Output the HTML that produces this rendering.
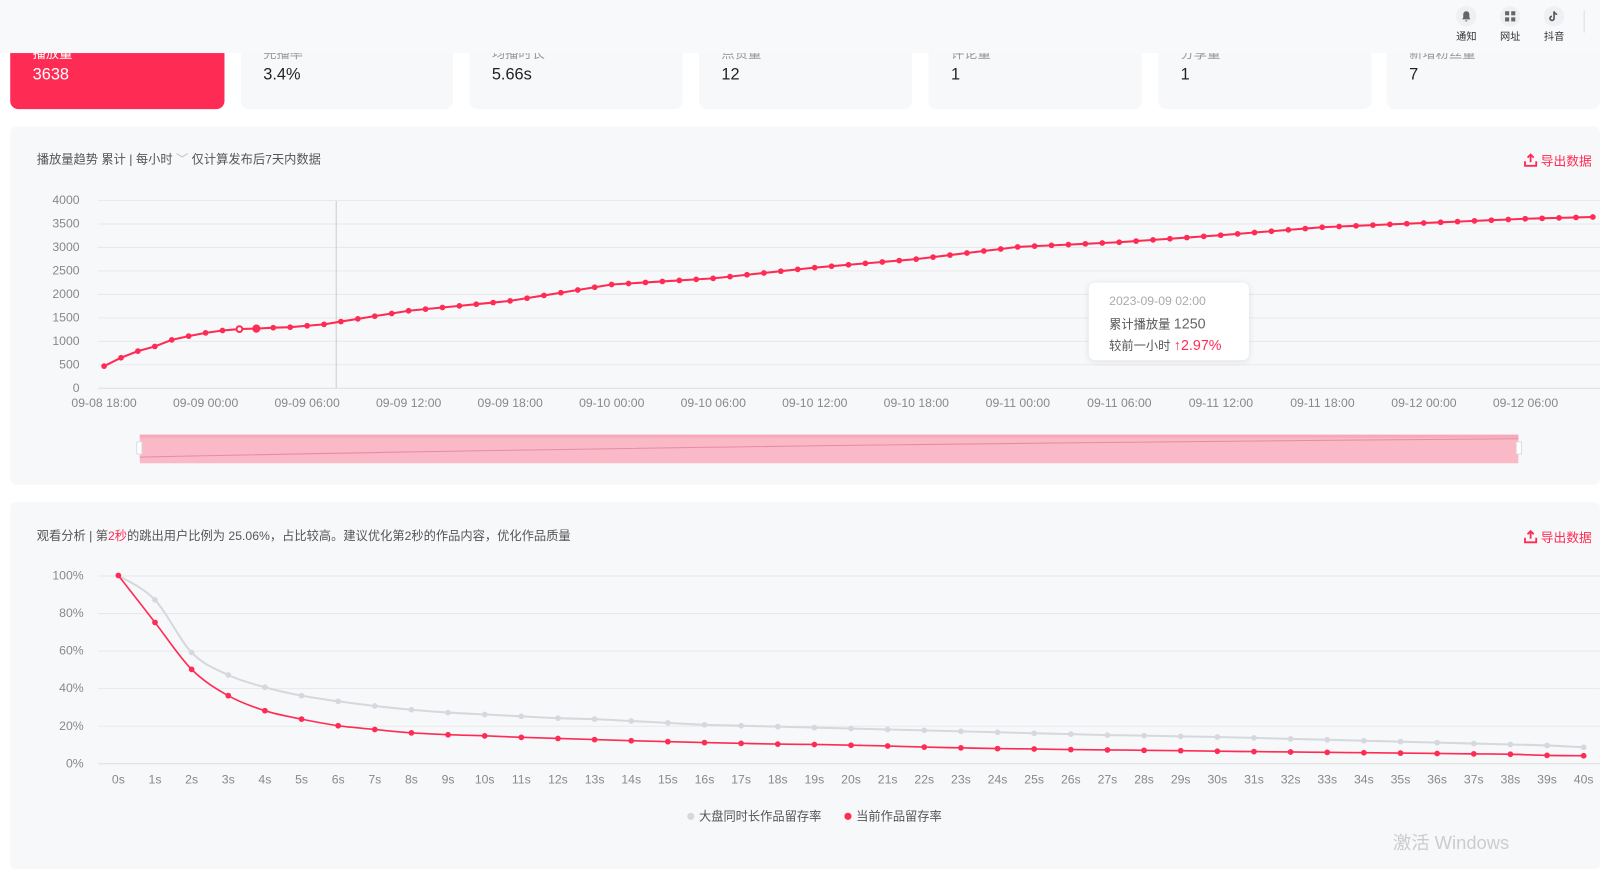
<!DOCTYPE html>
<html><head><meta charset="utf-8"><style>
body{margin:0;width:1600px;height:846px;overflow:hidden;background:#fff;font-family:"Liberation Sans","Noto Sans CJK SC",sans-serif;position:relative}
#w{position:absolute;left:0;top:0;width:1568px;height:830px;transform:scale(1.0204);transform-origin:0 0}
.hdr{position:absolute;left:0;top:0;width:1600px;height:52px;background:#f8f9fa;z-index:2}
.ic{position:absolute;top:6px;width:30px;text-align:center;font-size:10px;color:#333}
.ic .c{width:20px;height:20px;border-radius:50%;background:#eef0f3;margin:0 auto 1px;display:flex;align-items:center;justify-content:center}
.card{position:absolute;top:30px;height:77px;background:#f7f8fa;border-radius:8px}
.card .l{position:absolute;left:22px;top:12px;font-size:13px;color:#999}
.card .v{position:absolute;left:22px;top:35px;font-size:16px;color:#222}
.panel{position:absolute;left:10px;width:1558px;background:#f7f8fa;border-radius:6px}
.t{position:absolute;left:26px;font-size:12px;color:#555}
.exp{position:absolute;right:8px;font-size:12.5px;color:#fe2c55;display:flex;align-items:center;gap:3px}
</style></head><body><div id="w">
<div class="hdr">
 <div class="ic" style="left:1422px"><div class="c"><svg width="12" height="12" viewBox="0 0 12 12"><path d="M6 1C4 1 3 2.5 3 4.5V7L2 9h8L9 7V4.5C9 2.5 8 1 6 1ZM5 10h2v1H5z" fill="#666"/></svg></div>通知</div>
 <div class="ic" style="left:1465px"><div class="c"><svg width="12" height="12" viewBox="0 0 12 12"><rect x="1" y="1" width="4" height="4" fill="#666"/><rect x="7" y="1" width="4" height="4" fill="#666"/><rect x="1" y="7" width="4" height="4" fill="#666"/><rect x="7" y="7" width="4" height="4" fill="#666"/></svg></div>网址</div>
 <div class="ic" style="left:1508px"><div class="c"><svg width="12" height="12" viewBox="0 0 12 12"><path d="M6 1v7a2 2 0 1 1-2-2M6 1c0 1.5 1.5 3 3 3" stroke="#555" stroke-width="1.6" fill="none"/></svg></div>抖音</div>
 <div style="position:absolute;left:1552px;top:10px;width:1px;height:22px;background:#ddd"></div>
</div>
<div class="card" style="left:10px;width:210px;background:#fe2c55"><div class="l" style="color:#fff">播放量</div><div class="v" style="color:#fff">3638</div></div>
<div class="card" style="left:236px;width:208px"><div class="l">完播率</div><div class="v">3.4%</div></div>
<div class="card" style="left:460px;width:209px"><div class="l">均播时长</div><div class="v">5.66s</div></div>
<div class="card" style="left:685px;width:209px"><div class="l">点赞量</div><div class="v">12</div></div>
<div class="card" style="left:910px;width:209px"><div class="l">评论量</div><div class="v">1</div></div>
<div class="card" style="left:1135px;width:209px"><div class="l">分享量</div><div class="v">1</div></div>
<div class="card" style="left:1359px;width:209px"><div class="l">新增粉丝量</div><div class="v">7</div></div>

<div class="panel" style="top:124px;height:351px">
 <div class="t" style="top:23px">播放量趋势 累计 | 每小时 <span style="color:#bbb">﹀</span> 仅计算发布后7天内数据</div>
 <div class="exp" style="top:23px"><svg width="14" height="14" viewBox="0 0 14 14"><path d="M7 9V1.5M4 4.5 7 1.5 10 4.5M1.5 8v4.5h11V8" stroke="#fe2c55" stroke-width="1.8" fill="none"/></svg>导出数据</div>
</div>
<div class="panel" style="top:492px;height:360px">
 <div class="t" style="top:24px">观看分析 | 第<span style="color:#fe2c55">2秒</span>的跳出用户比例为 25.06%，占比较高。建议优化第2秒的作品内容，优化作品质量</div>
 <div class="exp" style="top:24px"><svg width="14" height="14" viewBox="0 0 14 14"><path d="M7 9V1.5M4 4.5 7 1.5 10 4.5M1.5 8v4.5h11V8" stroke="#fe2c55" stroke-width="1.8" fill="none"/></svg>导出数据</div>
</div>
<svg id="s" width="1600" height="846" style="position:absolute;left:0;top:0" font-family="Liberation Sans, Noto Sans CJK SC, sans-serif"></svg>
<div style="position:absolute;left:1067px;top:277px;width:157px;height:76px;background:#fff;border-radius:6px;box-shadow:0 1px 6px rgba(0,0,0,.1);font-size:12px;color:#555">
 <div style="position:absolute;left:20px;top:11px;color:#aaa">2023-09-09 02:00</div>
 <div style="position:absolute;left:20px;top:32px">累计播放量 <span style="font-size:14px;color:#666">1250</span></div>
 <div style="position:absolute;left:20px;top:53px">较前一小时 <span style="font-size:14px;color:#fe2c55">↑2.97%</span></div>
</div>
<div style="position:absolute;left:1365px;top:812px;font-size:18px;color:#ccc">激活 Windows</div>
</div>
<script>
var s='';
function L(x1,y1,x2,y2,c){s+='<line x1="'+x1+'" y1="'+y1+'" x2="'+x2+'" y2="'+y2+'" stroke="'+c+'" stroke-width="1"/>';}
function T(x,y,t,a){s+='<text x="'+x+'" y="'+y+'" font-size="12" fill="#888" text-anchor="'+a+'">'+t+'</text>';}
for(var i=0;i<=8;i++){var y=380-i*23;L(96,y+.5,1568,y+.5,i?'#e8e9eb':'#ddd');T(78,y+4,i*500,'end');}
var xl=['09-08 18:00','09-09 00:00','09-09 06:00','09-09 12:00','09-09 18:00','09-10 00:00','09-10 06:00','09-10 12:00','09-10 18:00','09-11 00:00','09-11 06:00','09-11 12:00','09-11 18:00','09-12 00:00','09-12 06:00'];
for(i=0;i<xl.length;i++)T(102+i*99.5,399,xl[i],'middle');
L(329.5,197,329.5,380,'#ccc');
var k=[[0,460],[1,640],[2,780],[3,880],[4,1020],[5,1100],[6,1170],[7,1220],[8,1250],[9,1260],[10,1280],[11,1290],[12,1320],[13,1350],[14,1410],[18,1640],[24,1850],[30,2200],[36,2330],[42,2560],[48,2740],[54,3000],[60,3100],[66,3250],[72,3420],[78,3510],[84,3600],[88,3638]];
var pts=[];
for(var h=0;h<=88;h++){var v;for(var j=0;j<k.length-1;j++){if(h>=k[j][0]&&h<=k[j+1][0]){v=k[j][1]+(k[j+1][1]-k[j][1])*(h-k[j][0])/(k[j+1][0]-k[j][0]);break;}}pts.push([102+h*16.58,380-v*0.046]);}
s+='<polyline fill="none" stroke="#fe2c55" stroke-width="2" points="'+pts.map(p=>p.join(',')).join(' ')+'"/>';
pts.forEach(function(p,i){s+='<circle cx="'+p[0]+'" cy="'+p[1]+'" r="'+(i==9?4:2.8)+'" fill="'+(i==8?'#fff':'#fe2c55')+'" stroke="#fe2c55" stroke-width="'+(i==8?2:0)+'"/>';});
s+='<rect x="137" y="426" width="1351" height="28" fill="#f9b9c6"/><rect x="137" y="426" width="1351" height="3" fill="#f7a9b9"/>';
s+='<path d="M137 448 Q700 436 1488 430" fill="none" stroke="#e88ba0" stroke-width="1"/>';
s+='<rect x="134" y="433" width="5" height="12" fill="#fff" stroke="#ddd"/><rect x="1486" y="433" width="5" height="12" fill="#fff" stroke="#ddd"/>';
var yl=['0%','20%','40%','60%','80%','100%'];
for(i=0;i<=5;i++){var y=748-i*36.8;L(96,y+.5,1568,y+.5,i?'#e8e9eb':'#ddd');T(82,y+4,yl[i],'end');}
for(i=0;i<=40;i++)T(116+i*35.9,768,i+'s','middle');
var g=[100,87,59,47,40.5,36,33,30.5,28.5,27,26,25,24,23.5,22.5,21.5,20.5,20,19.5,19,18.5,18,17.5,17,16.5,16,15.5,15,14.7,14.3,14,13.5,13,12.5,12,11.5,11,10.5,10,9.5,8.5];
var r=[100,75,50,36,28,23.5,20,18,16.2,15.2,14.6,13.8,13.2,12.6,12,11.5,11,10.6,10.2,10,9.6,9.2,8.6,8.2,7.8,7.6,7.3,7.1,6.9,6.7,6.4,6.2,6,5.8,5.6,5.4,5.2,5,4.8,4.2,4];
function draw(a,c,w){var p=a.map((v,i)=>[116+i*35.9,748-v*1.84]);var d='M'+p[0][0]+' '+p[0][1];for(var i=1;i<p.length;i++){var p0=p[i-2]||p[i-1],p1=p[i-1],p2=p[i],p3=p[i+1]||p[i];var c1x=p1[0]+(p2[0]-p0[0])/6,c1y=p1[1]+(p2[1]-p0[1])/6,c2x=p2[0]-(p3[0]-p1[0])/6,c2y=p2[1]-(p3[1]-p1[1])/6;d+=' C'+c1x+' '+c1y+' '+c2x+' '+c2y+' '+p2[0]+' '+p2[1];}s+='<path fill="none" stroke="'+c+'" stroke-width="'+w+'" d="'+d+'"/>';p.forEach(q=>{s+='<circle cx="'+q[0]+'" cy="'+q[1]+'" r="2.8" fill="'+c+'"/>';});}
draw(g,'#d5d8dd',2);draw(r,'#fe2c55',1.6);
s+='<circle cx="677" cy="800" r="3.5" fill="#d5d8dd"/><text x="685" y="804" font-size="12" fill="#555">大盘同时长作品留存率</text>';
s+='<circle cx="831" cy="800" r="3.5" fill="#fe2c55"/><text x="839" y="804" font-size="12" fill="#555">当前作品留存率</text>';
document.getElementById('s').innerHTML=s;
</script>
</body></html>
